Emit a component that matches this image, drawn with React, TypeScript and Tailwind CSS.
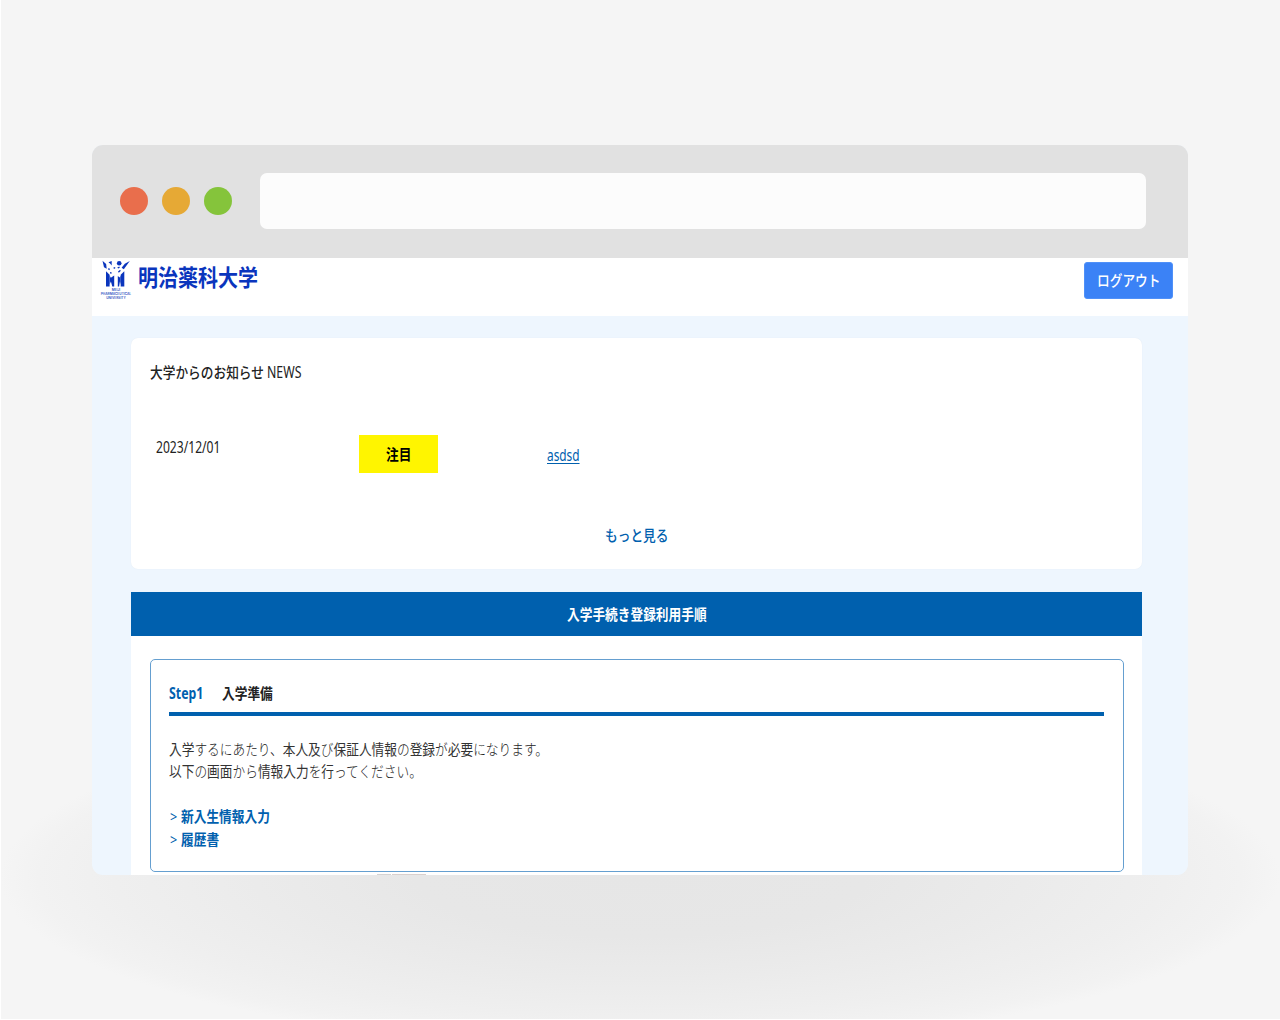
import type { ReactNode } from 'react';

function Squeezed({ children, className = '' }: { children: ReactNode; className?: string }) {
  return (
    <span className={`inline-block origin-left scale-x-[0.846] whitespace-nowrap ${className}`}>{children}</span>
  );
}

function Latin({ children, className = 'scale-x-[0.757]' }: { children: ReactNode; className?: string }) {
  return <span className={`inline-block origin-left text-[16px] whitespace-nowrap ${className}`}>{children}</span>;
}

// Kana are set lighter than the kanji around them.
function BodyLine({ text }: { text: string }) {
  return (
    <p>
      <Squeezed>
        {text.split(/([\u4e00-\u9fff]+)/).map((part, i) => (
          <span key={i} className={i % 2 ? 'font-normal text-[#333]' : 'font-light text-[#222]'}>
            {part}
          </span>
        ))}
      </Squeezed>
    </p>
  );
}

function Logo() {
  return (
    <div className="flex w-[31px] flex-col items-center">
      <svg className="h-[28px] w-[30px]" viewBox="0 0 30 28" fill="#0a35bd">
        <path d="M5 11.200l3.600 3.500V26.500H5z" />
        <path d="M8.600 15.500l1.200 2.200 3.400-2.200V26.500H11.300l-1.400-5-1.300 3z" />
        <path d="M23.300 11.200l-3.600 3.500V26.500h3.600z" />
        <path d="M19.700 15.500l-1 2-1.900-1.500V26.500h1.300l.8-5 .8 3z" />
        <path d="M1.500 .800l3.600 3.200.6 4.800L3 7.200z" />
        <path d="M7.500 2.200l3.200-1.200v4.600l-1.400-1.800z" />
        <path d="M28.800 1l-5 2.800-3.200 4 2.200 1.400z" />
        <circle cx="18.200" cy="3.200" r="2.300" />
        <path d="M12.800 7l1.600.5-.4 1.300-1.500-.3zM16.300 7.500l2-1 .5 1.300-1.700.8zM7.500 8l1.400.8-.4 1.500-1.400-.8zM9 12l1.800.6-.4 1.200-1.300-.4zM17 11.500l1.900-1.400 1 .7-2.100 1.900z" />
      </svg>
      <div className="flex h-[12px] scale-[0.38] flex-col items-center justify-center text-center font-[Inter] text-[8.5px] leading-[11px] font-semibold whitespace-nowrap text-[#2a4dc0]">
        <span>MEIJI</span>
        <span>PHARMACEUTICAL</span>
        <span>UNIVERSITY</span>
      </div>
    </div>
  );
}

export default function App() {
  return (
    <div className="h-[1020px] w-[1280px] overflow-hidden border-b border-l border-white bg-[#f5f5f5] bg-[radial-gradient(ellipse_640px_170px_at_639px_877px,#e6e6e6_0%,#e7e7e7_35%,#ebebeb_60%,#efefef_82%,#f2f2f2_94%,#f5f5f5_100%)] pt-[145px] pl-[91px] font-['Noto_Sans','Noto_Sans_CJK_JP',sans-serif] text-[15px] text-[#222]">
      <div className="flex h-[729.500px] w-[1096px] flex-col overflow-hidden rounded-[11px] bg-[#eef6fe]">
        <div className="flex h-[112.500px] shrink-0 items-center bg-[#e1e1e1] pl-[28px]">
          <div className="flex gap-[14px]">
            <span className="size-[28px] rounded-full bg-[#e96e4c]" />
            <span className="size-[28px] rounded-full bg-[#e6a935]" />
            <span className="size-[28px] rounded-full bg-[#85c43b]" />
          </div>
          <div className="ml-[28px] h-[56px] w-[886px] rounded-[7px] bg-[#fcfcfc]" />
        </div>

        <header className="flex h-[58.500px] shrink-0 items-start justify-between bg-white pr-[15px] pl-[8px]">
          <div className="flex pt-[2px]">
            <Logo />
            <span className="ml-[7px] inline-block origin-left scale-x-[0.87] text-[23px] leading-[35px] font-bold whitespace-nowrap text-[#0a35bd]">
              明治薬科大学
            </span>
          </div>
          <button className="mt-[4px] flex h-[37px] w-[89px] items-center rounded-[3px] border border-[#4f90f8] bg-[#3b82f6] pl-[12px] font-medium text-white">
            <Squeezed>ログアウト</Squeezed>
          </button>
        </header>

        <main className="flex w-[1050px] flex-1 flex-col pt-[22px] pl-[39px]">
          <section className="flex h-[231px] shrink-0 flex-col rounded-[7px] bg-white shadow-[0_0_1px_#dfe7ee]">
            <div className="flex h-[97px] pt-[22px] pl-[19px] leading-[24px]">
              <Squeezed className="w-[138px] font-medium">大学からのお知らせ</Squeezed>
              <Latin className="-ml-[21px] scale-x-[0.77]">NEWS</Latin>
            </div>
            <div className="grid h-[38px] grid-cols-[203px_187px_1fr] pl-[25px]">
              <div className="leading-[25px]">
                <Latin>2023/12/01</Latin>
              </div>
              <div className="flex h-[37.500px] w-[79px] items-center bg-[#fff500] pl-[27px] font-bold text-black">
                <Squeezed>注目</Squeezed>
              </div>
              <div className="flex items-center pt-px pl-px text-[#0060ae]">
                <Latin className="scale-x-[0.74] underline underline-offset-2">asdsd</Latin>
              </div>
            </div>
            <div className="pt-[50px] pl-[474px] leading-[24px] font-medium text-[#0060ae]">
              <Squeezed>もっと見る</Squeezed>
            </div>
          </section>

          <section className="mt-[23px] flex flex-1 flex-col bg-white">
            <h2 className="flex h-[44px] shrink-0 items-center bg-[#0060ae] pl-[436px] font-bold text-white">
              <Squeezed>入学手続き登録利用手順</Squeezed>
            </h2>
            <div className="mx-[18.500px] mt-[23px] h-[212.500px] shrink-0 rounded-[5px] border border-[#659fd0] px-[18.500px]">
              <div className="flex h-[56px] border-b-4 border-[#0060ae] pt-[21px] leading-[24px] font-bold">
                <div className="w-[53px] text-[#0060ae]">
                  <Latin className="scale-x-[0.77]">Step1</Latin>
                </div>
                <Squeezed>入学準備</Squeezed>
              </div>
              <div className="pt-[21.500px] leading-[22.500px]">
                <BodyLine text="入学するにあたり、本人及び保証人情報の登録が必要になります。" />
                <BodyLine text="以下の画面から情報入力を行ってください。" />
              </div>
              <ul className="pt-[22.500px] leading-[22.500px] text-[#0060ae]">
                {['新入生情報入力', '履歴書'].map((label) => (
                  <li key={label} className="flex">
                    <span className="w-[12px] pl-px">
                      <Squeezed>&gt;</Squeezed>
                    </span>
                    <Squeezed className="font-bold">{label}</Squeezed>
                  </li>
                ))}
              </ul>
            </div>
            <div className="mt-[2.500px] ml-[246px] flex h-px shrink-0 gap-px">
              <span className="w-[14px] bg-[#d5d3d3]" />
              <span className="w-[34px] bg-[#d9d0ce]" />
            </div>
          </section>
        </main>
      </div>
    </div>
  );
}
